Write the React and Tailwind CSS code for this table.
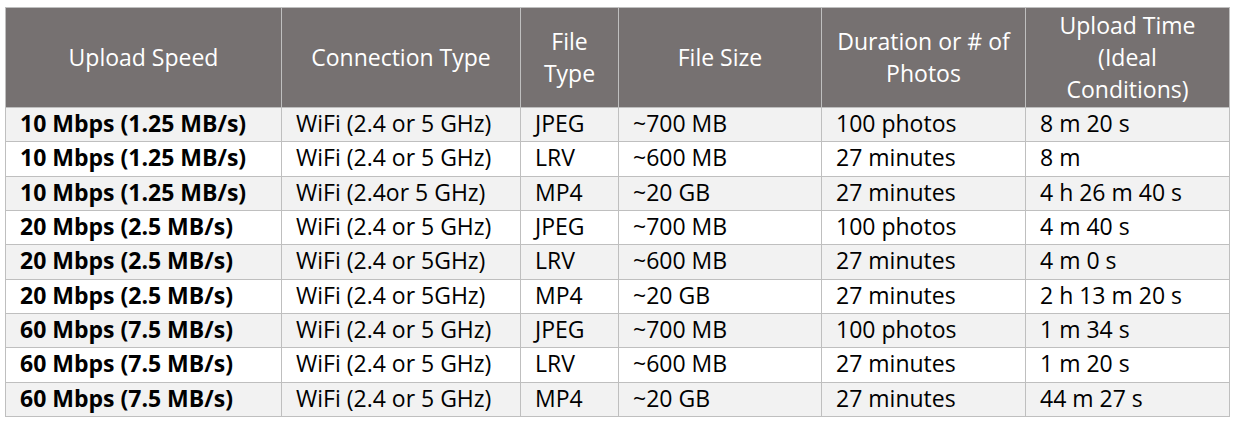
const ROWS = [
  ['10 Mbps (1.25 MB/s)', 'WiFi (2.4 or 5 GHz)', 'JPEG', '~700 MB', '100 photos', '8 m 20 s'],
  ['10 Mbps (1.25 MB/s)', 'WiFi (2.4 or 5 GHz)', 'LRV', '~600 MB', '27 minutes', '8 m'],
  ['10 Mbps (1.25 MB/s)', 'WiFi (2.4or 5 GHz)', 'MP4', '~20 GB', '27 minutes', '4 h 26 m 40 s'],
  ['20 Mbps (2.5 MB/s)', 'WiFi (2.4 or 5 GHz)', 'JPEG', '~700 MB', '100 photos', '4 m 40 s'],
  ['20 Mbps (2.5 MB/s)', 'WiFi (2.4 or 5GHz)', 'LRV', '~600 MB', '27 minutes', '4 m 0 s'],
  ['20 Mbps (2.5 MB/s)', 'WiFi (2.4 or 5GHz)', 'MP4', '~20 GB', '27 minutes', '2 h 13 m 20 s'],
  ['60 Mbps (7.5 MB/s)', 'WiFi (2.4 or 5 GHz)', 'JPEG', '~700 MB', '100 photos', '1 m 34 s'],
  ['60 Mbps (7.5 MB/s)', 'WiFi (2.4 or 5 GHz)', 'LRV', '~600 MB', '27 minutes', '1 m 20 s'],
  ['60 Mbps (7.5 MB/s)', 'WiFi (2.4 or 5 GHz)', 'MP4', '~20 GB', '27 minutes', '44 m 27 s'],
];

const HEADERS = [
  ['Upload Speed'],
  ['Connection Type'],
  ['File', 'Type'],
  ['File Size'],
  ['Duration or # of', 'Photos'],
  ['Upload Time', '(Ideal', 'Conditions)'],
];

const WIDTHS = ['w-[276px]', 'w-[239px]', 'w-[98px]', 'w-[203px]', 'w-[204px]', 'w-[204px]'];

export default function App() {
  return (
    <div className="bg-white w-[1236px] h-[428px] pt-[7px] pl-[5px] font-['Open_Sans','Noto_Sans',sans-serif] text-[23px]">
      <table className="border-collapse table-fixed w-[1224px]">
        <colgroup>
          {WIDTHS.map((w, i) => <col key={i} className={w} />)}
        </colgroup>
        <thead>
          <tr className="h-[100px] bg-[#767171] text-white">
            {HEADERS.map((lines, i) => (
              <th key={i} className="border border-[#bfbfbf] font-normal text-center align-middle leading-[32px] px-0 pb-[2px] whitespace-nowrap">
                {lines.map((l, j) => <div key={j}>{l}</div>)}
              </th>
            ))}
          </tr>
        </thead>
        <tbody>
          {ROWS.map((row, r) => (
            <tr key={r} className={r % 2 === 0 ? 'h-[34.33px] bg-[#f2f2f2]' : 'h-[34.33px] bg-white'}>
              {row.map((cell, c) => (
                <td
                  key={c}
                  className={
                    'border border-[#bfbfbf] text-black pl-[14px] pb-[3px] leading-[30px] whitespace-nowrap ' +
                    (c === 0 ? 'font-bold' : 'font-normal')
                  }
                >
                  {cell}
                </td>
              ))}
            </tr>
          ))}
        </tbody>
      </table>
    </div>
  );
}
